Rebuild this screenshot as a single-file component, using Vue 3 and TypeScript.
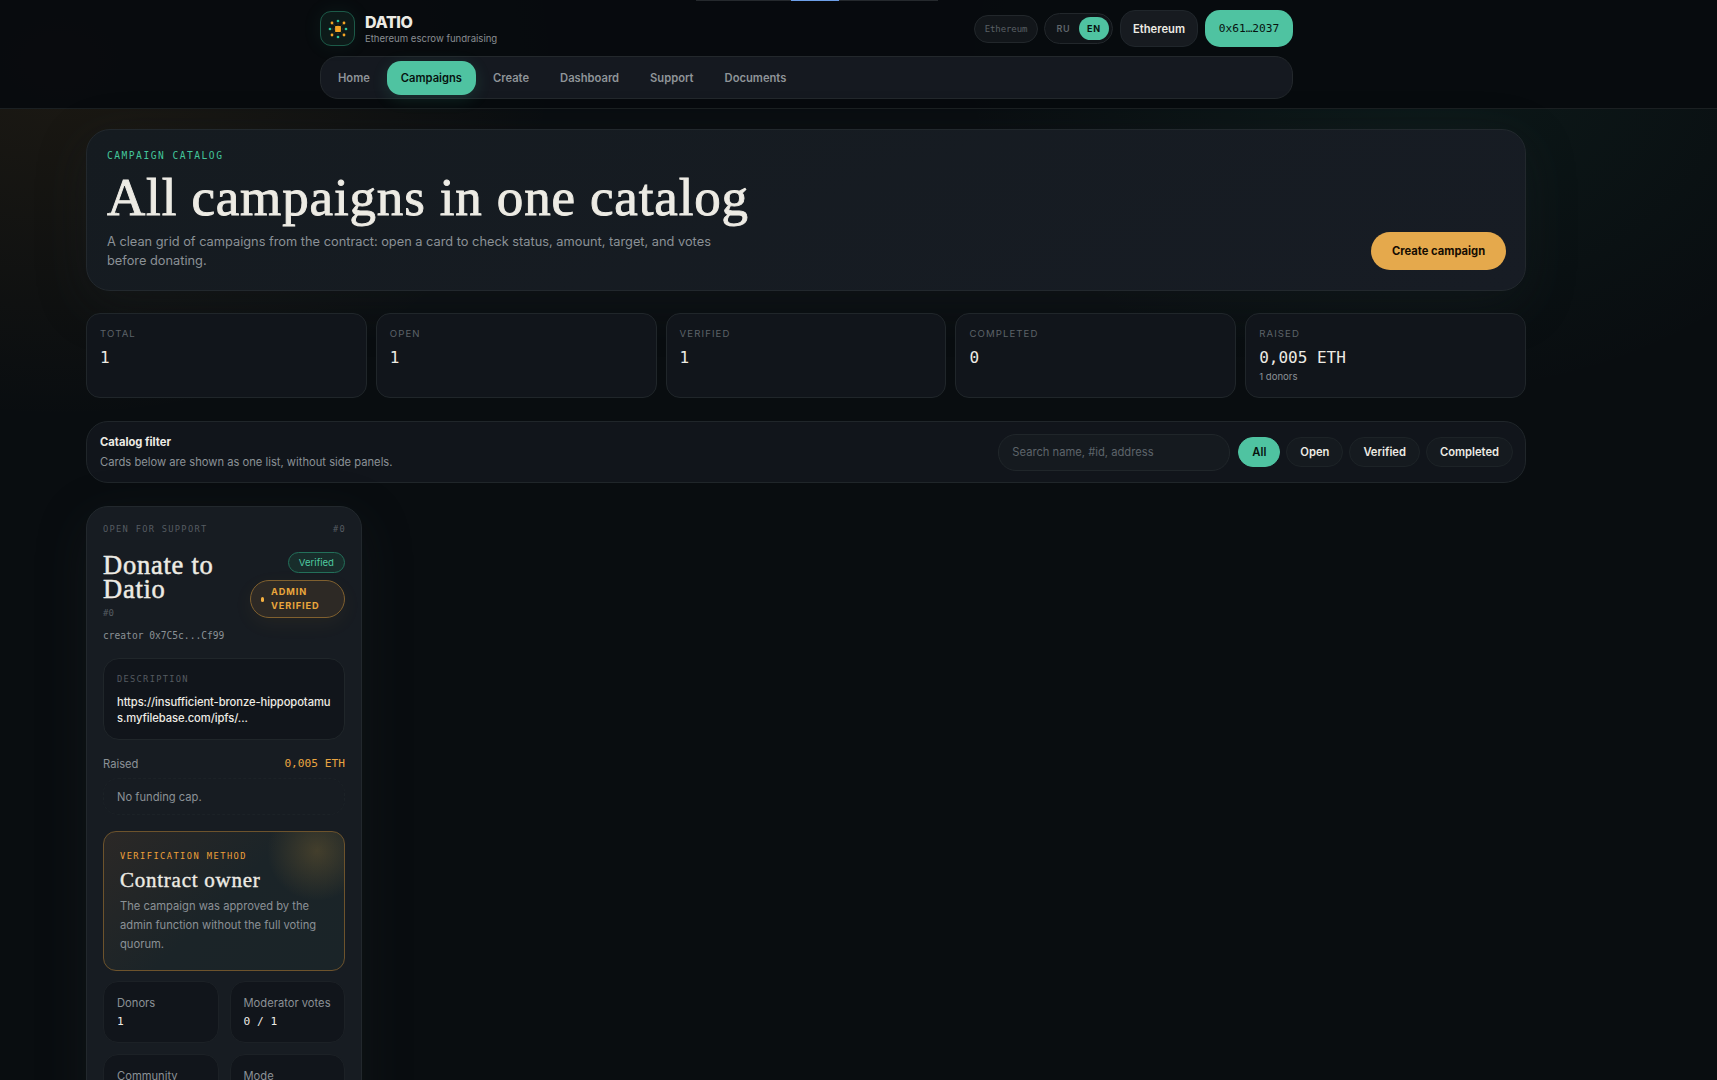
<script setup lang="ts">
const nav: string[] = ['Home', 'Campaigns', 'Create', 'Dashboard', 'Support', 'Documents']
const stats: { k: string; v: string; n?: string }[] = [
  { k: 'Total', v: '1' },
  { k: 'Open', v: '1' },
  { k: 'Verified', v: '1' },
  { k: 'Completed', v: '0' },
  { k: 'Raised', v: '0,005 ETH', n: '1 donors' },
]
const filters: string[] = ['All', 'Open', 'Verified', 'Completed']
const facts: { k: string; v: string }[] = [
  { k: 'Donors', v: '1' },
  { k: 'Moderator votes', v: '0 / 1' },
  { k: 'Community', v: '' },
  { k: 'Mode', v: '' },
]
const ring: number[][] = [[17, 9], [17, 25], [9, 17], [25, 17]]
const diag: number[][] = [[11, 11], [23, 11], [11, 23], [23, 23]]
</script>

<template>
  <div class="app">
    <div class="loader"><i></i></div>
    <header class="header">
      <div class="head-in">
        <div class="top">
          <div class="logo">
            <svg width="34" height="34" viewBox="0 0 34 34">
              <path d="M12 12L22 22M22 12L12 22M17 11V23M11 17H23" stroke="#7a5a24" stroke-width=".5" stroke-dasharray="1 1" />
              <rect x="14.1" y="14.1" width="5.8" height="5.8" rx=".7" fill="#f5a524" />
              <circle v-for="(p, i) in ring" :key="i" :cx="p[0]" :cy="p[1]" r="1.35" fill="#2fc39a" />
              <circle v-for="(p, i) in diag" :key="'d' + i" :cx="p[0]" :cy="p[1]" r="1.4" fill="#f5a524" />
            </svg>
          </div>
          <div class="brand">
            <strong>DATIO</strong>
            <span>Ethereum escrow fundraising</span>
          </div>
          <div class="tools">
            <span class="net">Ethereum</span>
            <div class="lang"><span>RU</span><span class="on">EN</span></div>
            <button class="eth">Ethereum</button>
            <button class="wallet">0x61…2037</button>
          </div>
        </div>
        <nav class="nav">
          <a v-for="n in nav" :key="n" :class="{ on: n === 'Campaigns' }">{{ n }}</a>
        </nav>
      </div>
    </header>

    <main class="main">
      <section class="hero">
        <div class="hero-text">
          <div class="eyebrow">CAMPAIGN CATALOG</div>
          <h1>All campaigns in one catalog</h1>
          <p>A clean grid of campaigns from the contract: open a card to check status, amount, target, and votes before donating.</p>
        </div>
        <button class="create">Create campaign</button>
      </section>

      <section class="stats">
        <div v-for="s in stats" :key="s.k" class="stat">
          <span class="k">{{ s.k }}</span>
          <span class="v">{{ s.v }}</span>
          <span v-if="s.n" class="n">{{ s.n }}</span>
        </div>
      </section>

      <section class="filter">
        <div class="ftext">
          <strong>Catalog filter</strong>
          <span>Cards below are shown as one list, without side panels.</span>
        </div>
        <input type="text" placeholder="Search name, #id, address" />
        <div class="pills">
          <button v-for="f in filters" :key="f" :class="{ on: f === 'All' }">{{ f }}</button>
        </div>
      </section>

      <article class="card">
        <div class="meta"><span>OPEN FOR SUPPORT</span><span>#0</span></div>
        <div class="title-row">
          <div class="title">
            <h2>Donate to Datio</h2>
            <span class="id">#0</span>
            <span class="creator">creator 0x7C5c...Cf99</span>
          </div>
          <div class="badges">
            <span class="ver">Verified</span>
            <span class="adm"><i></i><b>ADMIN VERIFIED</b></span>
          </div>
        </div>
        <div class="desc">
          <span>DESCRIPTION</span>
          <p>https://insufficient-bronze-hippopotamus.myfilebase.com/ipfs/...</p>
        </div>
        <div class="raised"><span>Raised</span><b>0,005 ETH</b></div>
        <div class="cap">No funding cap.</div>
        <div class="method">
          <span class="mk">VERIFICATION METHOD</span>
          <h3>Contract owner</h3>
          <p>The campaign was approved by the admin function without the full voting quorum.</p>
        </div>
        <div class="facts">
          <div v-for="f in facts" :key="f.k" class="fact">
            <span>{{ f.k }}</span>
            <b>{{ f.v }}</b>
          </div>
        </div>
      </article>
    </main>
  </div>
</template>

<style>
html, body { margin: 0; background: #090c0f; overflow: hidden; }
</style>

<style scoped>
* { box-sizing: border-box; }
h1, h2, h3, p { margin: 0; }
button, input { font: inherit; margin: 0; }
.app {
  width: 1717px; height: 1080px; overflow: hidden; position: relative;
  padding-right: 104px;
  font-family: Inter, sans-serif; color: #edebe4; font-size: 11.2px;
  background:
    radial-gradient(ellipse 500px 360px at 60px 60px, rgba(224, 150, 50, .09), transparent),
    radial-gradient(ellipse 460px 330px at 1420px 70px, rgba(60, 190, 150, .07), transparent),
    #090d10;
}
.loader { position: absolute; top: 0; left: 696px; width: 242px; height: 1px; background: #25292d; z-index: 2; }
.loader i { display: block; width: 48px; height: 1px; margin-left: 95px; background: #6d9fe8; }
.header { height: 109px; margin-right: -104px; padding-right: 104px; background: rgba(8, 11, 14, .93); border-bottom: 1px solid #1b2022; }
.head-in { width: 973px; margin: 0 auto; padding-top: 10px; }
.top { display: flex; align-items: center; height: 37px; }
.logo { width: 35px; height: 35px; border: 1px solid #1c5a48; border-radius: 11px; background: #0d1a19; box-shadow: 0 0 20px rgba(60, 190, 150, .08); display: flex; }
.logo svg { display: block; margin: -.5px; }
.brand { margin-left: 10px; display: flex; flex-direction: column; }
.brand strong { font-size: 16px; line-height: 20px; font-weight: 800; letter-spacing: -.4px; margin-top: 1px; }
.brand span { font-size: 9.6px; line-height: 14px; color: #898e92; letter-spacing: -.02px; }
.tools { margin-left: auto; display: flex; align-items: center; }
.net { height: 28px; width: 64px; border: 1px solid #22272b; border-radius: 14px; background: #12161a; font: 9px/26px "DejaVu Sans Mono", monospace; letter-spacing: -.1px; color: #5a6065; text-align: center; }
.lang { margin-left: 6px; height: 31px; width: 69px; border: 1px solid #22272b; border-radius: 16px; background: #101418; padding: 3px; display: flex; font-size: 9px; font-weight: 600; letter-spacing: .8px; line-height: 24px; color: #5f656a; }
.lang span { width: 31px; text-align: center; }
.lang .on { width: 30px; height: 23px; border-radius: 12px; background: #4fc3a1; color: #07120f; font-weight: 700; }
.eth { margin-left: 7px; width: 78px; height: 37px; border: 1px solid #20262b; border-radius: 15px; background: #171b20; color: #edebe4; font-size: 11.2px; font-weight: 600; padding: 0; }
.wallet { margin-left: 7px; width: 88px; height: 37px; border: 0; border-radius: 15px; background: #4fc3a1; color: #07120f; font: 500 11.2px "DejaVu Sans Mono", monospace; letter-spacing: 0; padding: 0; }
.nav { margin-top: 9px; height: 43px; border: 1px solid #23282c; border-radius: 18px; background: #151920; display: flex; align-items: center; padding: 0 3px; }
.nav a { height: 34px; line-height: 34px; padding: 0 14px; margin-right: 3px; border-radius: 14px; color: #8f9498; font-size: 11.2px; font-weight: 600; }
.nav a.on { background: #4fc3a1; color: #07120f; box-shadow: 0 4px 16px rgba(60, 190, 150, .16); }
.main { width: 1440px; margin: 20px 0 0 86px; }
.hero { height: 162px; border: 1px solid #22282d; border-radius: 24px; background: linear-gradient(160deg, #151b20, #171c24); padding: 20px 19px 20px 20px; display: flex; justify-content: space-between; align-items: flex-end; box-shadow: 0 14px 50px rgba(30, 36, 40, .3); }
.hero-text { width: 650px; height: 120px; }
.eyebrow { font: 400 9.6px/12px "DejaVu Sans Mono", monospace; letter-spacing: 1.5px; color: #43c69b; }
h1 { font: 400 53px/60px "Liberation Serif", serif; -webkit-text-stroke: .9px #edebe4; margin-top: 5px; white-space: nowrap; letter-spacing: .85px; }
.hero p { font-size: 12.8px; line-height: 19px; color: #8b9196; margin-top: 5px; width: 620px; }
.create { width: 135px; height: 38px; border: 0; border-radius: 19px; background: #e5a94c; color: #160d02; font-size: 11.2px; font-weight: 700; padding: 0; }
.stats { margin-top: 22px; display: grid; grid-template-columns: repeat(5, 1fr); gap: 9px; }
.stat { height: 85px; border: 1px solid #20262a; border-radius: 14px; background: #11151b; padding: 13px; display: flex; flex-direction: column; }
.stat .k { font-size: 9.6px; line-height: 14px; letter-spacing: 1.1px; color: #5c6268; text-transform: uppercase; }
.stat .v { font: 16px/20px "DejaVu Sans Mono", monospace; margin-top: 7px; }
.stat .n { font-size: 9.6px; line-height: 14px; color: #8b9196; margin-top: 2px; }
.filter { margin-top: 23px; height: 62px; border: 1px solid #20262a; border-radius: 22px; background: #11151b; display: flex; align-items: center; padding: 0 12px 0 13px; }
.ftext { display: flex; flex-direction: column; flex: 1; }
.ftext strong { font-size: 11.2px; line-height: 18px; font-weight: 700; }
.ftext span { font-size: 11.2px; line-height: 18px; margin-top: 2px; color: #8b9196; }
.filter input { width: 232px; height: 37px; border: 1px solid #20262a; border-radius: 18px; background: #151a1f; padding: 0 13px; font-size: 11.2px; color: #edebe4; }
.filter input::placeholder { color: #5d646a; opacity: 1; }
.pills { display: flex; gap: 6px; margin-left: 8px; }
.pills button { height: 30px; border: 1px solid #1d2327; border-radius: 15px; background: #151a1f; color: #edebe4; font-size: 11.2px; font-weight: 600; padding: 0 13px; }
.pills .on { background: #4fc3a1; border-color: #4fc3a1; color: #07120f; }
.card { margin-top: 23px; width: 276px; height: 640px; border: 1px solid #22282d; border-radius: 22px; background: #171c22; padding: 16px 16px 0; box-shadow: 0 14px 50px rgba(30, 36, 40, .3); }
.meta { display: flex; justify-content: space-between; font: 8.7px/12px "DejaVu Sans Mono", monospace; letter-spacing: 1.3px; color: #555b61; }
.meta span:last-child { margin-right: -1px; }
.title-row { display: flex; justify-content: space-between; margin-top: 17px; height: 90px; }
.title { display: flex; flex-direction: column; width: 140px; padding-top: 1px; }
h2 { font: 400 26.5px/24px "Liberation Serif", serif; -webkit-text-stroke: .5px #edebe4; letter-spacing: .75px; }
.id { font: 9px/12px "DejaVu Sans Mono", monospace; color: #555b61; margin-top: 6px; }
.creator { font: 9.6px/14px "DejaVu Sans Mono", monospace; color: #8b9196; margin-top: 10px; white-space: nowrap; }
.badges { display: flex; flex-direction: column; align-items: flex-end; gap: 7px; }
.ver { height: 21px; border: 1px solid #23705a; border-radius: 11px; background: #182d2b; color: #4fc9a0; font-size: 9.6px; line-height: 19px; padding: 0 10px; }
.adm { width: 95px; height: 38px; border: 1px solid #80602f; border-radius: 19px; background: #2d2925; color: #eaa63c; display: flex; align-items: center; padding: 0 10px; box-shadow: 0 6px 20px rgba(224, 150, 50, .06); }
.adm i { width: 3px; height: 5px; border-radius: 1.5px; background: #f5b040; margin-right: 7px; }
.adm b { font-size: 9.2px; line-height: 14px; letter-spacing: .9px; width: 55px; }
.desc { margin-top: 16px; height: 82px; border: 1px solid #20262a; border-radius: 16px; background: #11151b; padding: 13px 0 0 13px; }
.desc span { display: block; font: 8.7px/14px "DejaVu Sans Mono", monospace; letter-spacing: 1.3px; color: #555b61; }
.desc p { width: 215px; font-size: 11.2px; line-height: 16px; letter-spacing: -.07px; margin-top: 8px; word-break: break-all; font-weight: 500; }
.raised { display: flex; justify-content: space-between; margin-top: 15px; line-height: 18px; font-size: 11.2px; color: #8b9196; }
.raised b { font: 500 11.2px/18px "DejaVu Sans Mono", monospace; color: #e9a541; }
.cap { margin-top: 5px; height: 37px; border: 1px dashed #1c2227; border-radius: 15px; padding: 0 13px; line-height: 36px; color: #8b9196; }
.method { margin-top: 16px; height: 140px; border: 1px solid #6d532c; border-radius: 13px; padding: 18px 16px; background: radial-gradient(circle 50px at 213px 19px, rgba(229, 169, 60, .2), transparent), linear-gradient(135deg, #2b2826, #1b2428 50%, #1a2428); }
.mk { display: block; font: 500 8.7px/12px "DejaVu Sans Mono", monospace; letter-spacing: 1.45px; color: #eda03a; white-space: nowrap; }
h3 { font: 400 21px/24px "Liberation Serif", serif; -webkit-text-stroke: .4px #edebe4; letter-spacing: .75px; margin-top: 6px; }
.method p { font-size: 11.2px; line-height: 19px; color: #8b9196; margin-top: 5px; white-space: normal; }
.facts { margin-top: 10px; display: grid; grid-template-columns: repeat(2, minmax(0, 1fr)); gap: 11px; }
.fact { height: 62px; border: 1px solid #1c2126; border-radius: 15px; background: #11151b; padding: 12px 12px 0 13px; }
.fact span { display: block; line-height: 18px; color: #8b9196; white-space: nowrap; }
.fact b { display: block; font: 500 11.2px/18px "DejaVu Sans Mono", monospace; margin-top: 1px; }
</style>
